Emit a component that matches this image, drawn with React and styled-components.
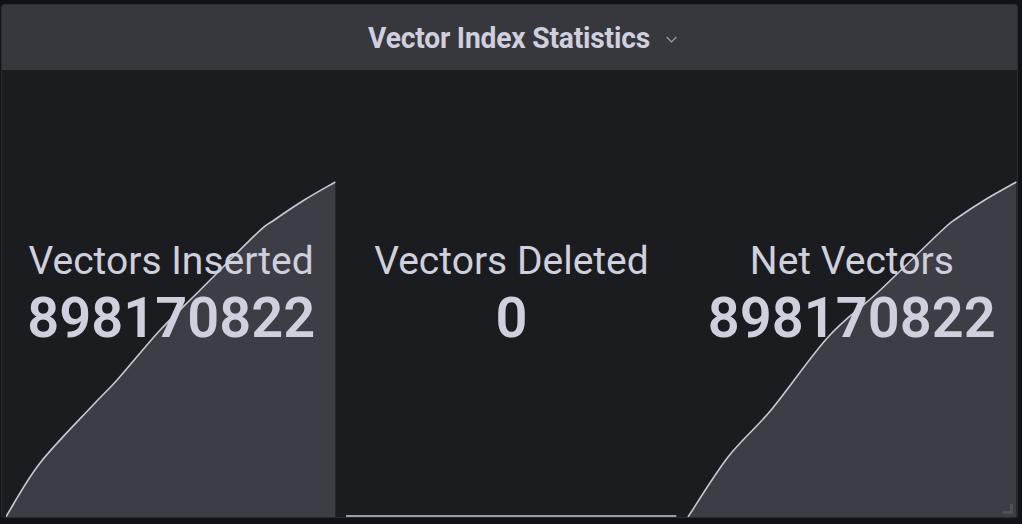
import styled, { createGlobalStyle } from "styled-components";

const GlobalStyle = createGlobalStyle`
  html, body {
    margin: 0;
    background: #111217;
  }
  body {
    font-family: Roboto, "Liberation Sans", sans-serif;
  }
`;

const stats = [
  {
    label: "Vectors Inserted",
    value: "898170822",
    points: [
      [0, 447], [1, 445], [34, 393], [87, 335], [111, 310],
      [154, 260], [194, 220], [251, 163], [268, 150], [298, 130], [329, 112],
    ],
  },
  {
    label: "Vectors Deleted",
    value: "0",
    points: [[0, 446], [330, 446]],
    flat: true,
  },
  {
    label: "Net Vectors",
    value: "898170822",
    points: [
      [1, 447], [41, 387], [84, 340], [141, 267], [191, 222], [254, 161],
      [270, 148], [299, 129], [329, 112],
    ],
  },
];

// catmull-rom through the points, so the line bends like the graph does
const smooth = (pts) => {
  let d = `M${pts[0][0]} ${pts[0][1]}`;
  for (let i = 0; i < pts.length - 1; i++) {
    const p0 = pts[i - 1] || pts[i];
    const p1 = pts[i];
    const p2 = pts[i + 1];
    const p3 = pts[i + 2] || p2;
    const c1 = [p1[0] + (p2[0] - p0[0]) / 6, p1[1] + (p2[1] - p0[1]) / 6];
    const c2 = [p2[0] - (p3[0] - p1[0]) / 6, p2[1] - (p3[1] - p1[1]) / 6];
    d += ` C${c1[0]} ${c1[1]} ${c2[0]} ${c2[1]} ${p2[0]} ${p2[1]}`;
  }
  return d;
};

const Spark = ({ points, flat }) => {
  const line = smooth(points);
  const area = `${line} L${points[points.length - 1][0]} 447 L${points[0][0]} 447 Z`;
  return (
    <Chart viewBox="0 0 330 447" preserveAspectRatio="none">
      {!flat && <path d={area} fill="#3d3e45" />}
      <path
        d={line}
        fill="none"
        stroke="#c9c9d6"
        strokeWidth="1.6"
        vectorEffect="non-scaling-stroke"
      />
    </Chart>
  );
};

const App = () => (
  <>
    <GlobalStyle />
    <Panel>
      <Header>
        <Title>
          <TitleText>Vector Index Statistics</TitleText>
          <Chevron viewBox="0 0 12 8">
            <path d="M1.5 1.8 L6 6.2 L10.5 1.8" fill="none" stroke="#9a9aa8" strokeWidth="1.3" />
          </Chevron>
        </Title>
      </Header>
      <Body>
        {stats.map((s) => (
          <Stat key={s.label}>
            <Spark points={s.points} flat={s.flat} />
            <Label>{s.label}</Label>
            <Value>{s.value}</Value>
          </Stat>
        ))}
        <Handle />
      </Body>
    </Panel>
  </>
);

export default App;

const Panel = styled.div`
  margin: 4px 0 0 1px;
  width: 1017px;
  height: 514px;
  box-sizing: border-box;
  border: 1px solid #2b2c32;
  border-radius: 3px;
  overflow: hidden;
  display: flex;
  flex-direction: column;
  background: #1b1c20;
`;

const Header = styled.div`
  height: 65px;
  flex-shrink: 0;
  background: #37383e;
  display: flex;
  align-items: center;
  justify-content: center;
`;

const Title = styled.div`
  position: relative;
  display: flex;
  align-items: center;
`;

const TitleText = styled.div`
  color: #cfcfdd;
  font-size: 30px;
  font-weight: 700;
  letter-spacing: -0.2px;
  transform: scaleX(0.94);
`;

const Chevron = styled.svg`
  position: absolute;
  right: -18px;
  top: 15px;
  width: 13px;
  height: 9px;
`;

const Body = styled.div`
  position: relative;
  flex: 1;
  display: grid;
  grid-template-columns: repeat(3, 1fr);
  gap: 10px;
  padding-left: 4px;
`;

const Stat = styled.div`
  position: relative;
  display: flex;
  flex-direction: column;
  align-items: center;
  justify-content: center;
  color: #cfcfdd;
  padding-top: 3px;
`;

const Chart = styled.svg`
  position: absolute;
  inset: 0;
  width: 100%;
  height: 100%;
`;

const Label = styled.div`
  position: relative;
  font-size: 39px;
  line-height: 45px;
  white-space: nowrap;
`;

const Value = styled.div`
  position: relative;
  font-size: 56px;
  font-weight: 600;
  line-height: 68px;
`;

const Handle = styled.div`
  position: absolute;
  right: 4px;
  bottom: 3px;
  width: 10px;
  height: 10px;
  border-right: 3px solid #55565c;
  border-bottom: 3px solid #55565c;
  box-sizing: border-box;
  opacity: 0.8;
`;
